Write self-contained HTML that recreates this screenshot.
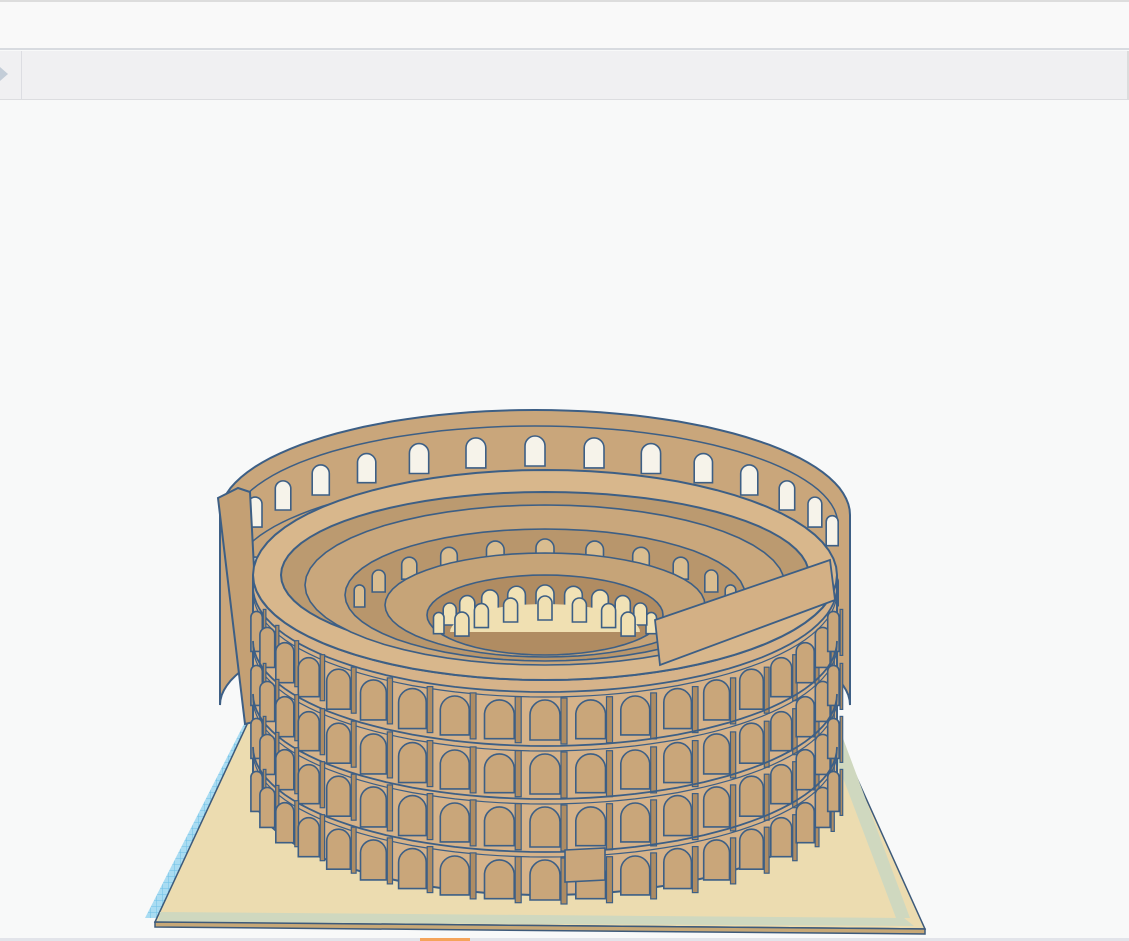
<!DOCTYPE html>
<html><head><meta charset="utf-8"><style>
html,body{margin:0;padding:0;width:1129px;height:941px;overflow:hidden;background:#f8f9f9;font-family:"Liberation Sans",sans-serif}
.top{position:absolute;left:0;top:0;width:1129px;height:50px;background:#f9f9f9;border-top:2px solid #ddd;border-bottom:2px solid #d8dbe0;box-sizing:border-box}
.bar{position:absolute;left:0;top:51px;width:1127px;height:48px;background:#f0f0f2;border-bottom:1px solid #dcdde0;border-right:2px solid #dcdcdc}
.bar .sep{position:absolute;left:21px;top:0;width:1px;height:48px;background:#dcdde2}
.tri{position:absolute;left:0;top:67px;width:0;height:0;border-top:7px solid transparent;border-bottom:7px solid transparent;border-left:8px solid #c3cdd8}
svg{position:absolute;left:0;top:0}
</style></head><body>
<div class="top"></div>
<div class="bar"><div class="sep"></div></div>
<div class="tri"></div>
<svg id="s" width="1129" height="941" viewBox="0 0 1129 941">
<defs>
<pattern id="grid" width="6" height="6" patternUnits="userSpaceOnUse"><rect width="6" height="6" fill="#a9dcf2"/><path d="M0 0H6M0 0V6" stroke="#6fc1e6" stroke-width="1"/></pattern>
</defs>
<polygon points="145,918 245,722 254,722 156,918" fill="url(#grid)"/>
<polygon points="155,922 250,718 828,714 925,929" fill="#ecdcb0" stroke="#3d5a7a" stroke-width="1.5"/>
<polygon points="160,912 904,918 914,926 158,922" fill="#cfd8bf"/>
<polygon points="155,922 925,929 925,934 155,927" fill="#c7a877" stroke="#3d5a7a" stroke-width="1.5"/>
<polygon points="823,725 838,725 910,918 896,918" fill="#cfd8bf"/>
<rect x="0" y="938" width="1129" height="3" fill="#e2e4ea"/>
<rect x="420" y="938" width="50" height="3" fill="#f5a45a"/>
<g id="c"></g>
</svg>
<script>
(function(){
var S="#3d5f85",g=document.getElementById('c'),h='';
function el(s){h+=s;}
function arc(cx,cy,rx,ry,off,t0,t1,n){var p=[];for(var i=0;i<=n;i++){var t=t0+(t1-t0)*i/n;p.push((cx-rx*Math.cos(t)).toFixed(1)+','+(cy+ry*Math.sin(t)+off).toFixed(1));}return p;}
function arch(x,y,w,hh,fill){var r=w/2;return '<path d="M'+(x-r).toFixed(1)+','+(y+hh).toFixed(1)+'V'+(y+r).toFixed(1)+'A'+r.toFixed(1)+','+r.toFixed(1)+' 0 0 1 '+(x+r).toFixed(1)+','+(y+r).toFixed(1)+'V'+(y+hh).toFixed(1)+'Z" fill="'+fill+'" stroke="'+S+'" stroke-width="1.6"/>';}
var B={cx:535,cy:515,rx:315,ry:105};
var tp=arc(B.cx,B.cy,B.rx,B.ry,0,Math.PI,2*Math.PI,60);
var bt=arc(B.cx,B.cy+190,B.rx,B.ry*0.9,0,2*Math.PI,Math.PI,60);
el('<polygon points="'+tp.join(' ')+' '+bt.join(' ')+'" fill="#c9a67b" stroke="'+S+'" stroke-width="2"/>');
el('<polyline points="'+arc(B.cx,B.cy,B.rx-12,B.ry-6,10,Math.PI,2*Math.PI,60).join(' ')+'" fill="none" stroke="'+S+'" stroke-width="1.5"/>');
el('<polyline points="'+arc(B.cx,B.cy,B.rx-14,B.ry-8,60,Math.PI,2*Math.PI,60).join(' ')+'" fill="none" stroke="'+S+'" stroke-width="1.5"/>');
for(var i=1;i<16;i++){var t=Math.PI+Math.PI*i/16;var s=Math.abs(Math.sin(t));var x=B.cx-(B.rx-12)*Math.cos(t),y=B.cy+(B.ry-6)*Math.sin(t)+20;var w=10+10*s;el(arch(x,y,w,30,'#f6f3ea'));el(arch(x,y+60,w,30,'#efe8d4'));}
el('<polygon points="218,498 238,488 250,492 262,720 245,724" fill="#c4a074" stroke="'+S+'" stroke-width="2"/>');
var F={cx:545,cy:575,rx:292,ry:105,H:215};
var ftop=arc(F.cx,F.cy,F.rx,F.ry,0,0,Math.PI,60);
var fbot=arc(F.cx,F.cy,F.rx,F.ry,F.H,Math.PI,0,60);
el('<polygon points="'+ftop.join(' ')+' '+fbot.join(' ')+'" fill="#d6b38a" stroke="'+S+'" stroke-width="2"/>');
var lv=[18,72,125,178];
for(var L=0;L<4;L++){
 el('<polyline points="'+arc(F.cx,F.cy,F.rx,F.ry,lv[L]-6,0,Math.PI,60).join(' ')+'" fill="none" stroke="'+S+'" stroke-width="1.8"/>');
 el('<polyline points="'+arc(F.cx,F.cy,F.rx,F.ry,lv[L]-1,0,Math.PI,60).join(' ')+'" fill="none" stroke="'+S+'" stroke-width="1.2"/>');
 for(var i=1;i<20;i++){var t=Math.PI*i/20;var s=Math.sin(t);var x=F.cx-F.rx*Math.cos(t),y=F.cy+F.ry*s+lv[L];var w=8+22*s;el(arch(x,y+2,w,40,'#c9a67a'));
  el('<rect x="'+(x+w/2+1).toFixed(1)+'" y="'+y.toFixed(1)+'" width="'+(2+4*s).toFixed(1)+'" height="46" fill="#ae8c63" stroke="'+S+'" stroke-width="1.2"/>');}
}
var inner=arc(F.cx,F.cy,F.rx-28,F.ry-22,0,0,2*Math.PI,80);
var outer=arc(F.cx,F.cy,F.rx,F.ry,0,0,2*Math.PI,80);
el('<polygon points="'+outer.join(' ')+'" fill="#d8b78c" stroke="'+S+'" stroke-width="2"/>');
el('<polygon points="'+inner.join(' ')+'" fill="#bb9a70" stroke="'+S+'" stroke-width="2"/>');
var tiers=[{rx:240,ry:80,cy:585,f:'#c9a77c'},{rx:200,ry:66,cy:595,f:'#b8966c'},{rx:160,ry:52,cy:605,f:'#c6a478'},{rx:118,ry:40,cy:615,f:'#b08c62'}];
for(var k=0;k<tiers.length;k++){var T=tiers[k];
 el('<polygon points="'+arc(F.cx,T.cy,T.rx,T.ry,0,0,2*Math.PI,60).join(' ')+'" fill="'+T.f+'" stroke="'+S+'" stroke-width="1.6"/>');
 if(k%2==1){for(var i=1;i<12;i++){var t=Math.PI+Math.PI*i/12;var s=Math.abs(Math.sin(t));var x=F.cx-(T.rx-8)*Math.cos(t),y=T.cy+(T.ry-4)*Math.sin(t)+6;var w=8+10*s;el(arch(x,y,w,22,k==3?'#f1e2b6':'#d9bd90'));}}
}
el('<polygon points="'+arc(F.cx,632,95,28,0,Math.PI,2*Math.PI,30).join(' ')+'" fill="#f0e0b2" stroke="none"/>');
for(var i=1;i<8;i++){var t=Math.PI+Math.PI*i/8;var x=F.cx-90*Math.cos(t),y=630+26*Math.sin(t);el(arch(x,y-8,14,24,'#f0e0b2'));}
el('<polygon points="655,620 830,560 835,600 660,665" fill="#d3b085" stroke="'+S+'" stroke-width="1.8"/>');
el('<polygon points="565,850 605,848 605,880 565,882" fill="#c9a67b" stroke="'+S+'" stroke-width="1.6"/>');
g.innerHTML=h;
})();
</script>
</body></html>
